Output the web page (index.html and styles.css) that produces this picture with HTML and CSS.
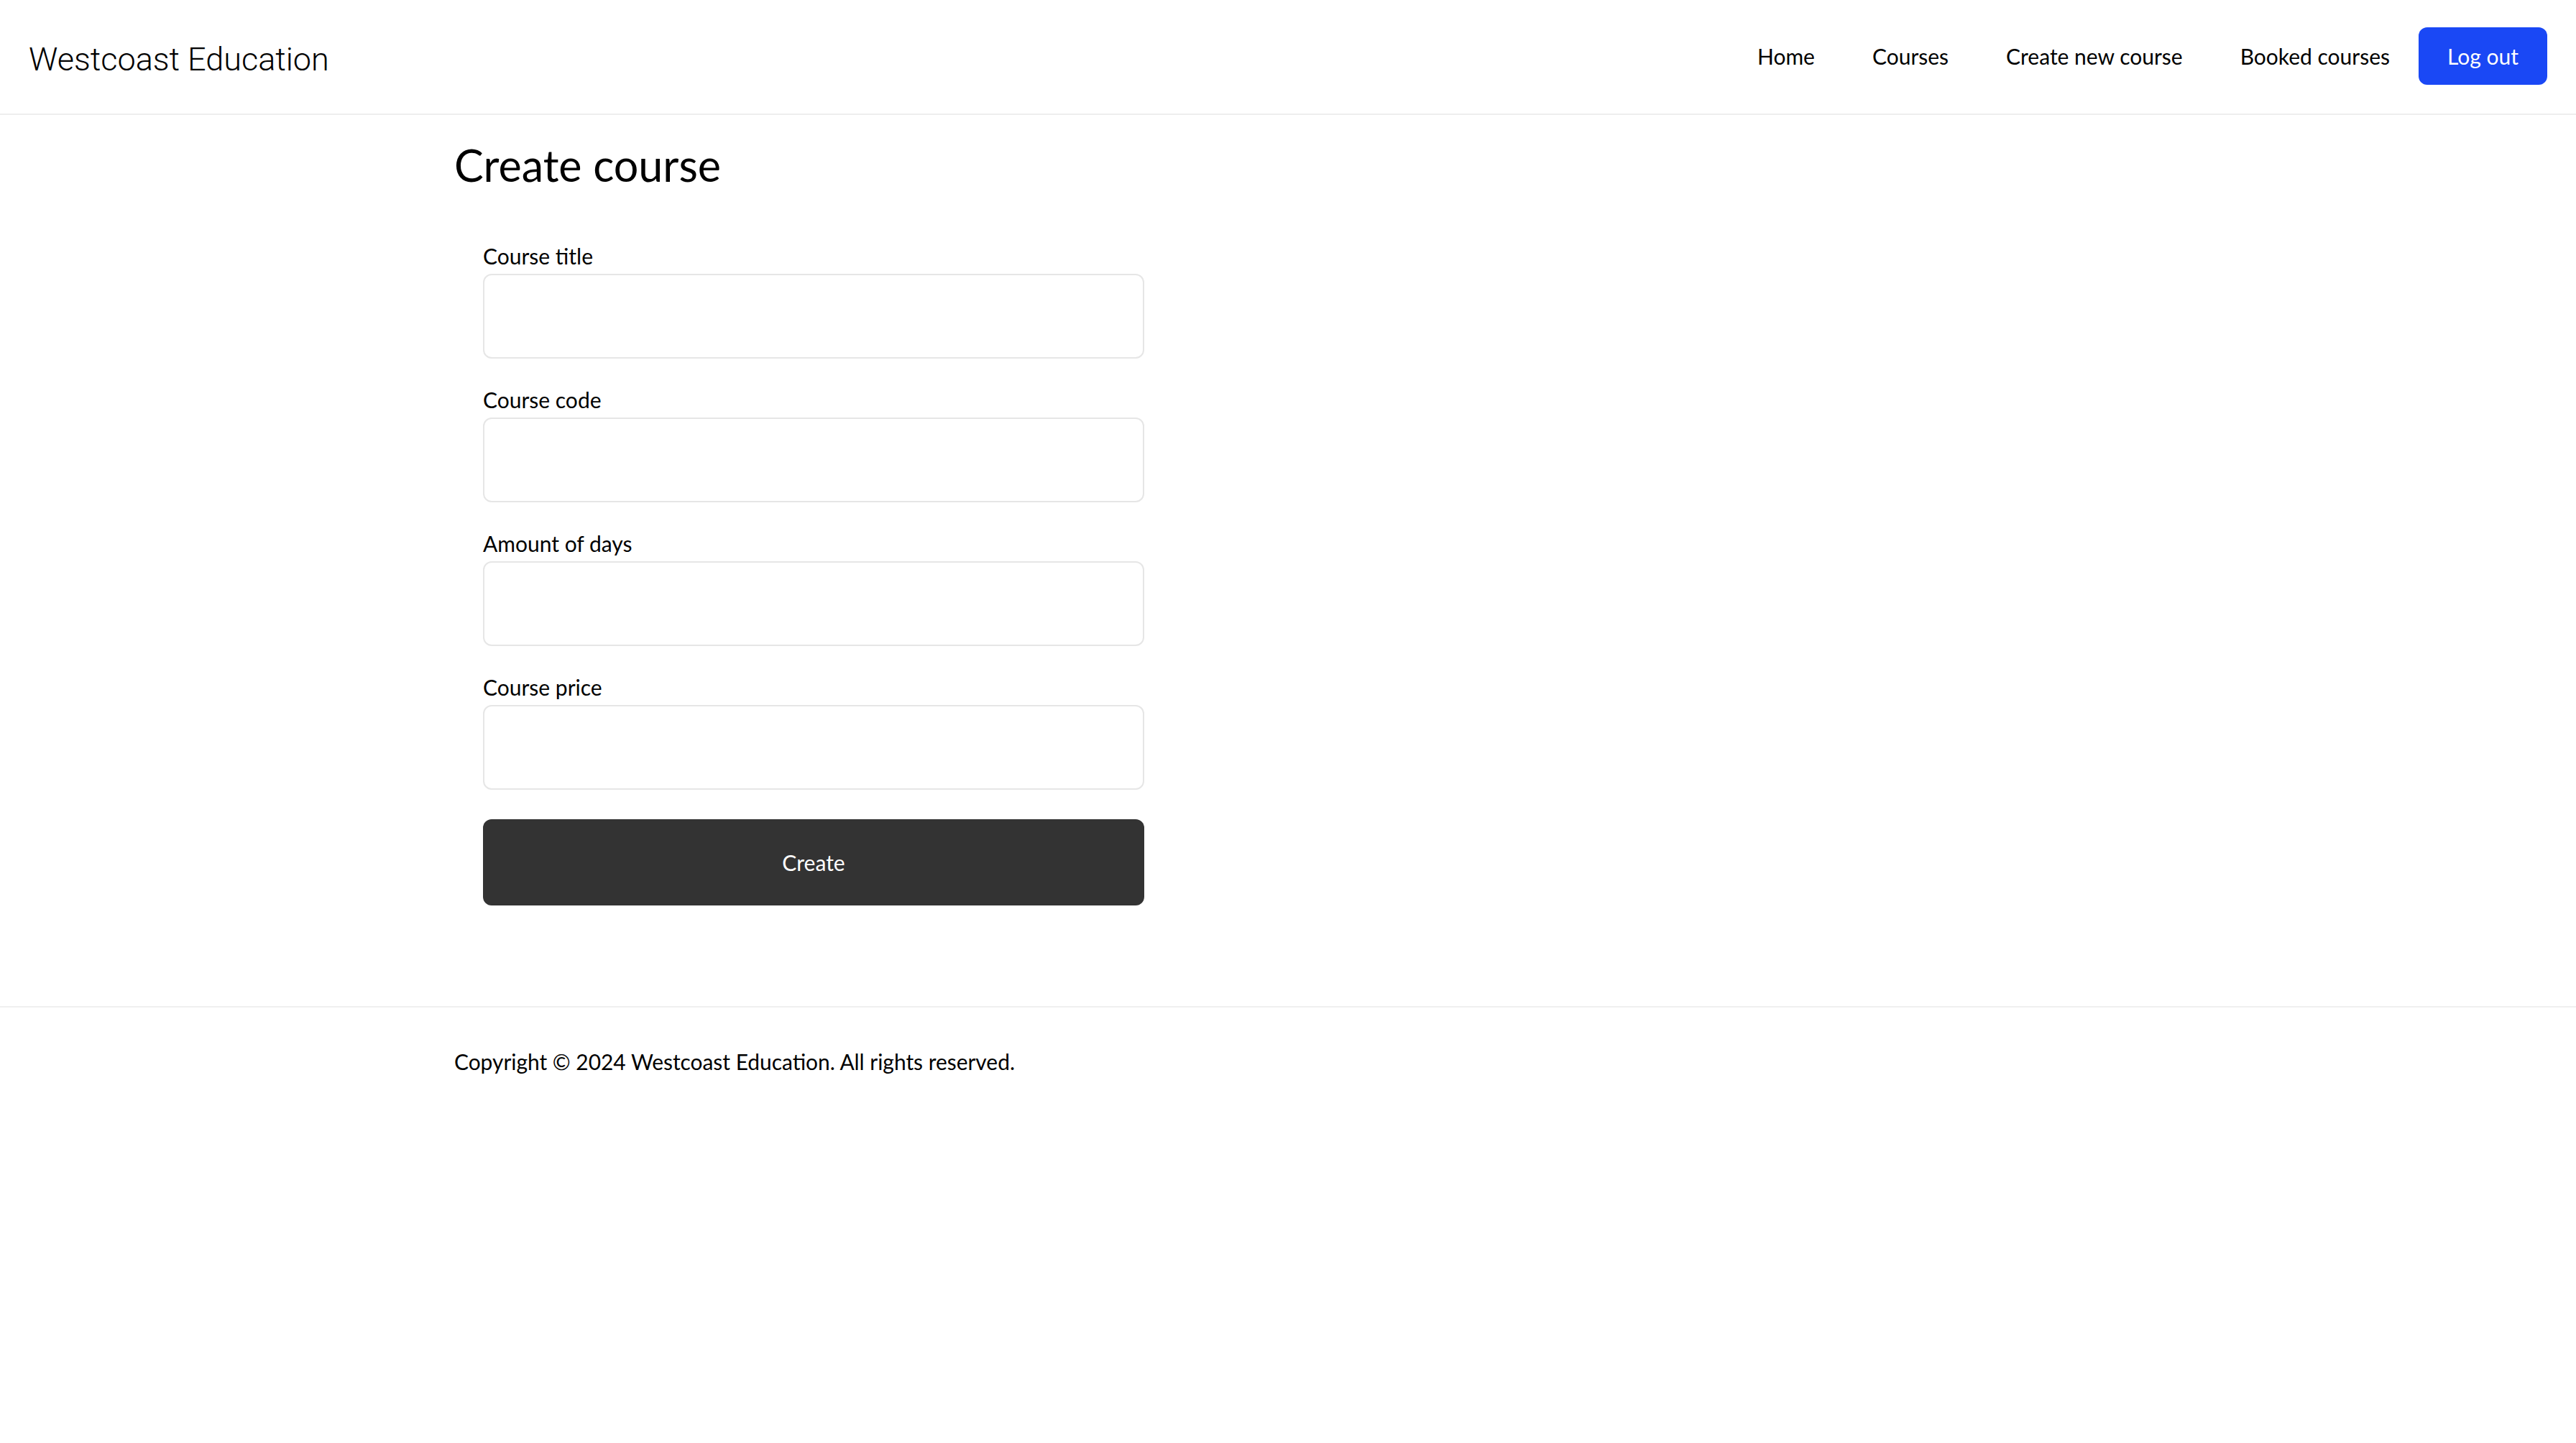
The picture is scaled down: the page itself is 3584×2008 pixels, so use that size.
FILE: index.html
```html
<!DOCTYPE html>
<html lang="en">
<head>
<meta charset="utf-8">
<title>Create course – Westcoast Education</title>
<link rel="stylesheet" href="styles.css">
</head>
<body>
<header class="site-header">
  <a class="logo" href="#">Westcoast Education</a>
  <nav class="main-nav">
    <a class="nav-link" href="#">Home</a>
    <a class="nav-link" href="#">Courses</a>
    <a class="nav-link" href="#">Create new course</a>
    <a class="nav-link" href="#">Booked courses</a>
    <button class="logout-btn" type="button">Log out</button>
  </nav>
</header>
<main class="container">
  <h1 class="page-title">Create course</h1>
  <form class="course-form">
    <div class="field">
      <label class="field-label" for="title">Course title</label>
      <input class="field-input" id="title" type="text">
    </div>
    <div class="field">
      <label class="field-label" for="code">Course code</label>
      <input class="field-input" id="code" type="text">
    </div>
    <div class="field">
      <label class="field-label" for="days">Amount of days</label>
      <input class="field-input" id="days" type="text">
    </div>
    <div class="field">
      <label class="field-label" for="price">Course price</label>
      <input class="field-input" id="price" type="text">
    </div>
    <button class="create-btn" type="submit">Create</button>
  </form>
</main>
<footer class="site-footer">
  <div class="container footer-inner">Copyright © 2024 Westcoast Education. All rights reserved.</div>
</footer>
</body>
</html>
```

FILE: styles.css
```css
* {
  box-sizing: border-box;
}

html, body {
  margin: 0;
  padding: 0;
  background: #ffffff;
}

body {
  font-family: Lato, "Noto Sans", sans-serif;
  font-size: 30px;
  color: #000000;
}

.site-header {
  display: flex;
  align-items: center;
  justify-content: space-between;
  height: 160px;
  padding: 38px 40px 40px 40px;
  border-bottom: 2px solid #eeeeee;
}

.logo {
  font-family: Roboto, "Noto Sans", sans-serif;
  font-weight: 300;
  font-size: 45px;
  color: #000000;
  text-decoration: none;
  padding-top: 8px;
}

.main-nav {
  display: flex;
  align-items: center;
}

.nav-link {
  color: #000000;
  text-decoration: none;
  padding: 0 40px;
  line-height: 36px;
  font-size: 30px;
}

.logout-btn {
  font-family: Lato, sans-serif;
  font-size: 30px;
  color: #ffffff;
  background: #1a48f5;
  border: none;
  border-radius: 12px;
  height: 80px;
  padding: 0 40px;
  cursor: pointer;
}

.container {
  max-width: 2400px;
  margin: 0 auto;
  padding: 0 40px;
}

main.container {
  padding-top: 33px;
  padding-bottom: 100px;
}

.page-title {
  font-size: 61px;
  font-weight: 400;
  margin: 0 0 32px 0;
  line-height: normal;
}

.course-form {
  max-width: 1000px;
  padding: 40px;
  display: flex;
  flex-direction: column;
}

.field {
  display: flex;
  flex-direction: column;
  margin-bottom: 39px;
}

.field-label {
  display: block;
  line-height: 36px;
  margin-bottom: 7px;
}

.field-input {
  display: block;
  width: 100%;
  height: 118px;
  border: 2px solid #e6e6e6;
  border-radius: 12px;
  padding: 0 20px;
  font-family: Lato, sans-serif;
  font-size: 30px;
  background: #ffffff;
  outline: none;
}

.create-btn {
  margin-top: 2px;
  height: 120px;
  width: 100%;
  border: none;
  border-radius: 12px;
  background: #333333;
  color: #ffffff;
  font-family: Lato, sans-serif;
  font-size: 30px;
  cursor: pointer;
}

.site-footer {
  border-top: 2px solid #efefef;
}

.footer-inner {
  padding-top: 57px;
  padding-bottom: 57px;
  line-height: 36px;
  font-size: 29.9px;
}
```
